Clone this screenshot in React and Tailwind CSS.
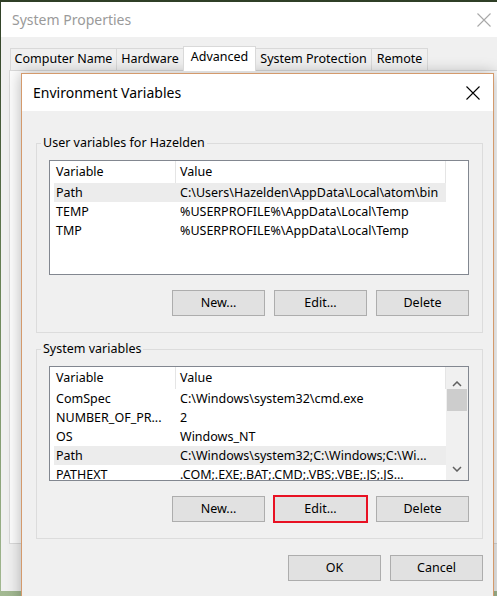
import React from 'react';

const USER_VARS = [
  ['Path', 'C:\\Users\\Hazelden\\AppData\\Local\\atom\\bin'],
  ['TEMP', '%USERPROFILE%\\AppData\\Local\\Temp'],
  ['TMP', '%USERPROFILE%\\AppData\\Local\\Temp'],
];

const SYSTEM_VARS = [
  ['ComSpec', 'C:\\Windows\\system32\\cmd.exe'],
  ['NUMBER_OF_PR...', '2'],
  ['OS', 'Windows_NT'],
  ['Path', 'C:\\Windows\\system32;C:\\Windows;C:\\Wi...'],
  ['PATHEXT', '.COM;.EXE;.BAT;.CMD;.VBS;.VBE;.JS;.JS...'],
];

const TABS = [
  { label: 'Computer Name', width: 'w-[107px]' },
  { label: 'Hardware', width: 'w-[68px]' },
  { label: 'Advanced', width: 'w-[73px]', active: true },
  { label: 'System Protection', width: 'w-[117px]' },
  { label: 'Remote', width: 'w-[57px]' },
];

function CloseX({ className }) {
  return (
    <svg width="14" height="14" viewBox="0 0 14 14" className={className}>
      <path d="M0.5 0.5 L13.5 13.5 M13.5 0.5 L0.5 13.5" stroke="currentColor" strokeWidth="1.1" fill="none" />
    </svg>
  );
}

function Chevron({ down }) {
  return (
    <svg width="10" height="6" viewBox="0 0 10 6">
      <path d={down ? 'M1 1 L5 5 L9 1' : 'M1 5 L5 1 L9 5'} fill="none" stroke="#606060" strokeWidth="1.5" />
    </svg>
  );
}

function Button({ children, highlight }) {
  return (
    <button
      className={
        'h-[26px] w-[93px] border border-[#adadad] bg-[#e1e1e1] text-center leading-[24px] ' +
        (highlight ? 'outline-2 outline-offset-[-1px] outline-[#e81123]' : '')
      }
    >
      {children}
    </button>
  );
}

function VarList({ rows, selected, scroll }) {
  return (
    <div className="flex h-[115px] w-[420px] overflow-hidden border border-[#828790] bg-white">
      <div className="flex-1 overflow-hidden">
        <div className="flex h-[22px] items-center">
          <div className="h-full w-[126px] border-r border-[#e5e5e5] pl-[6px] leading-[22px]">Variable</div>
          <div className="h-full w-[270px] border-r border-[#e5e5e5] pl-[4px] leading-[22px]">Value</div>
        </div>
        {rows.map(([name, value], i) => (
          <div
            key={name}
            className={'ml-[4px] flex h-[19px] w-[392px] whitespace-nowrap leading-[19px] ' + (i === selected ? 'bg-[#ececec]' : '')}
          >
            <div className="w-[122px] overflow-hidden pl-[2px]">{name}</div>
            <div className="flex-1 overflow-hidden pl-[4px]">{value}</div>
          </div>
        ))}
      </div>
      {scroll && (
        <div className="flex w-[22px] flex-col items-center bg-[#f0f0f0]">
          <div className="flex h-[22px] items-end pb-[2px]">
            <Chevron />
          </div>
          <div className="h-[22px] w-[20px] bg-[#cdcdcd]" />
          <div className="flex-1" />
          <div className="flex h-[22px] items-center">
            <Chevron down />
          </div>
        </div>
      )}
    </div>
  );
}

function Group({ label, className, children }) {
  return (
    <fieldset className={'w-[447px] border border-[#dcdcdc] px-[12px] pb-[16px] pt-[9px] ' + (className || '')}>
      <legend className="-ml-[8px] px-[2px] leading-[16px]">{label}</legend>
      {children}
    </fieldset>
  );
}

export default function App() {
  return (
    <div className="relative h-[596px] w-[497px] overflow-hidden bg-gradient-to-b from-[#2f3f26] via-[#6c8659] to-[#a3b992] font-['Noto_Sans',sans-serif] text-[12.5px] text-black">
      {/* System Properties window (behind) */}
      <div className="absolute left-[1px] top-[2px] flex h-[589px] w-[500px] flex-col bg-[#f0f0f0]">
        <div className="flex h-[35px] items-center justify-between bg-white pl-[11px] pr-[10px] text-[14px] text-[#9a9a9a]">
          <span>System Properties</span>
          <CloseX className="text-[#a8a8a8]" />
        </div>
        <div className="flex h-[33px] items-end pl-[9px]">
          {TABS.map((t, i) => (
            <div
              key={t.label}
              className={
                t.width +
                ' flex items-center justify-center border border-b-0 border-[#d9d9d9] whitespace-nowrap ' +
                (i > 0 ? '-ml-px ' : '') +
                (t.active ? 'relative z-10 -mb-px h-[25px] bg-white pb-[3px]' : 'h-[22px] bg-[#f0f0f0]')
              }
            >
              {t.label}
            </div>
          ))}
        </div>
        <div className="ml-[8px] h-[474px] border border-[#d9d9d9] bg-[#fcfcfc]" />
      </div>

      {/* Environment Variables dialog */}
      <div className="absolute left-[21px] top-[73px] h-[560px] w-[473px] border border-[#d49a6c] bg-[#f0f0f0] shadow-[0_0_14px_rgba(0,0,0,0.28)]">
        <div className="flex h-[37px] items-center justify-between bg-white pl-[11px] pr-[13px] text-[14px]">
          <span>Environment Variables</span>
          <CloseX className="text-black" />
        </div>
        <div className="pl-[14px] pt-[24px]">
          <Group label="User variables for Hazelden">
            <VarList rows={USER_VARS} selected={0} />
            <div className="mt-[15px] flex w-[420px] justify-end gap-[9px]">
              <Button>New...</Button>
              <Button>Edit...</Button>
              <Button>Delete</Button>
            </div>
          </Group>
          <Group label="System variables" className="mt-[8px]">
            <VarList rows={SYSTEM_VARS} selected={3} scroll />
            <div className="mt-[15px] flex w-[420px] justify-end gap-[9px]">
              <Button>New...</Button>
              <Button highlight>Edit...</Button>
              <Button>Delete</Button>
            </div>
          </Group>
          <div className="mt-[16px] flex w-[447px] justify-end gap-[9px]">
            <Button>OK</Button>
            <Button>Cancel</Button>
          </div>
        </div>
      </div>
    </div>
  );
}
